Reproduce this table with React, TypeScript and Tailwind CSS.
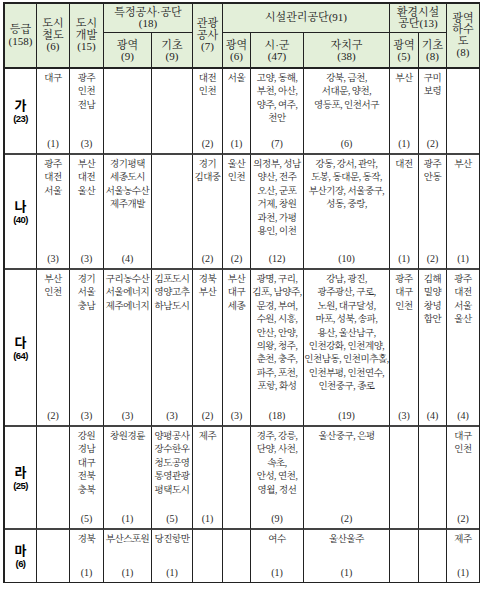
import React from "react"

type Cell = { names?: string; count?: string }

const serif = "font-['Liberation_Serif','Noto_Serif_CJK_KR','Noto_Sans_CJK_KR',serif]"

const rows: { grade: string; total: string; cells: Cell[] }[] = [
  {
    grade: "가",
    total: "(23)",
    cells: [
      { names: "대구", count: "(1)" },
      { names: "광주\n인천\n전남", count: "(3)" },
      {},
      {},
      { names: "대전\n인천", count: "(2)" },
      { names: "서울", count: "(1)" },
      { names: "고양, 동해,\n부천, 아산,\n양주, 여주,\n천안", count: "(7)" },
      { names: "강북, 금천,\n서대문, 양천,\n영등포, 인천서구", count: "(6)" },
      { names: "부산", count: "(1)" },
      { names: "구미\n보령", count: "(2)" },
      {},
    ],
  },
  {
    grade: "나",
    total: "(40)",
    cells: [
      { names: "광주\n대전\n서울", count: "(3)" },
      { names: "부산\n대전\n울산", count: "(3)" },
      { names: "경기평택\n세종도시\n서울농수산\n제주개발", count: "(4)" },
      {},
      { names: "경기\n김대중", count: "(2)" },
      { names: "울산\n인천", count: "(2)" },
      { names: "의정부, 성남\n양산, 전주\n오산, 군포\n거제, 창원\n과천, 가평\n용인, 이천", count: "(12)" },
      { names: "강동, 강서, 관악,\n도봉, 동대문, 동작,\n부산기장, 서울중구,\n성동, 중랑,", count: "(10)" },
      { names: "대전", count: "(1)" },
      { names: "광주\n안동", count: "(2)" },
      { names: "부산", count: "(1)" },
    ],
  },
  {
    grade: "다",
    total: "(64)",
    cells: [
      { names: "부산\n인천", count: "(2)" },
      { names: "경기\n서울\n충남", count: "(3)" },
      { names: "구리농수산\n서울에너지\n제주에너지", count: "(3)" },
      { names: "김포도시\n영양고추\n하남도시", count: "(3)" },
      { names: "경북\n부산", count: "(2)" },
      { names: "부산\n대구\n세종", count: "(3)" },
      {
        names: "광명, 구리,\n김포, 남양주,\n문경, 부여,\n수원, 시흥,\n안산, 안양,\n의왕, 청주,\n춘천, 충주,\n파주, 포천,\n포항, 화성",
        count: "(18)",
      },
      {
        names:
          "강남, 광진,\n광주광산, 구로,\n노원, 대구달성,\n마포, 성북, 송파,\n용산, 울산남구,\n인천강화, 인천계양,\n인천남동, 인천미추홀,\n인천부평, 인천연수,\n인천중구, 종로",
        count: "(19)",
      },
      { names: "광주\n대구\n인천", count: "(3)" },
      { names: "김해\n밀양\n창녕\n함안", count: "(4)" },
      { names: "광주\n대전\n서울\n울산", count: "(4)" },
    ],
  },
  {
    grade: "라",
    total: "(25)",
    cells: [
      {},
      { names: "강원\n경남\n대구\n전북\n충북", count: "(5)" },
      { names: "창원경륜", count: "(1)" },
      { names: "양평공사\n장수한우\n청도공영\n통영관광\n평택도시", count: "(5)" },
      { names: "제주", count: "(1)" },
      {},
      { names: "경주, 강릉,\n단양, 사천,\n속초,\n안성, 연천,\n영월, 정선", count: "(9)" },
      { names: "울산중구, 은평", count: "(2)" },
      {},
      {},
      { names: "대구\n인천", count: "(2)" },
    ],
  },
  {
    grade: "마",
    total: "(6)",
    cells: [
      {},
      { names: "경북", count: "(1)" },
      { names: "부산스포원", count: "(1)" },
      { names: "당진항만", count: "(1)" },
      {},
      {},
      { names: "여수", count: "(1)" },
      { names: "울산울주", count: "(1)" },
      {},
      {},
      { names: "제주", count: "(1)" },
    ],
  },
]

const hd = `bg-[#e3efd9] border-r border-b border-[#222] flex flex-col items-center justify-center text-center whitespace-pre text-[11px] leading-[11.5px] text-[#222] ${serif}`

export default function App() {
  return (
    <div className="bg-white w-[487px] h-[591px] pl-[3px] pt-[2px]">
      <div className="grid w-max grid-cols-[32px_33px_34px_48px_41px_30px_28px_53px_86px_29px_28px_32px] grid-rows-[29px_36px_86px_115px_157px_103px_52px] border-l-2 border-t-2 border-r border-b border-[#222]">
        {/* header */}
        <div className={`${hd} row-span-2 border-b-2`}>
          <span>등급</span>
          <span>(158)</span>
        </div>
        <div className={`${hd} row-span-2 border-b-2`}>
          <span>도시</span>
          <span>철도</span>
          <span>(6)</span>
        </div>
        <div className={`${hd} row-span-2 border-b-2`}>
          <span>도시</span>
          <span>개발</span>
          <span>(15)</span>
        </div>
        <div className={`${hd} col-span-2`}>
          <span>특정공사·공단</span>
          <span>(18)</span>
        </div>
        <div className={`${hd} row-span-2 border-b-2`}>
          <span>관광</span>
          <span>공사</span>
          <span>(7)</span>
        </div>
        <div className={`${hd} col-span-3`}>
          <span>시설관리공단(91)</span>
        </div>
        <div className={`${hd} col-span-2`}>
          <span>환경시설</span>
          <span>공단(13)</span>
        </div>
        <div className={`${hd} row-span-2 border-r-0 border-b-2`}>
          <span>광역</span>
          <span>하수</span>
          <span>도</span>
          <span>(8)</span>
        </div>
        {[
          ["광역", "(9)"],
          ["기초", "(9)"],
          ["광역", "(6)"],
          ["시·군", "(47)"],
          ["자치구", "(38)"],
          ["광역", "(5)"],
          ["기초", "(8)"],
        ].map(([a, b], i) => (
          <div key={i} className={`${hd} border-b-2 pt-[2px]`}>
            <span>{a}</span>
            <span>{b}</span>
          </div>
        ))}

        {/* body */}
        {rows.map((row, ri) => (
          <React.Fragment key={row.grade}>
            <div
              className={`border-r border-[#222] flex flex-col items-center justify-center gap-[1px] ${
                ri < rows.length - 1 ? "border-b-2 border-b-[#444]" : ""
              }`}
            >
              <span className="font-['Noto_Sans_CJK_KR',sans-serif] font-bold text-[13px] leading-[15px] text-black">
                {row.grade}
              </span>
              <span className="font-['Liberation_Sans',sans-serif] font-bold text-[9.5px] leading-[12px] tracking-[-0.6px] text-black">
                {row.total}
              </span>
            </div>
            {row.cells.map((c, ci) => (
              <div
                key={ci}
                className={`border-[#222] flex flex-col items-center justify-between pt-[3px] pb-[3px] text-[9.5px] leading-[13.4px] tracking-[-0.45px] text-[#2a2a2a] text-center ${serif} ${
                  ci < row.cells.length - 1 ? "border-r" : ""
                } ${ri < rows.length - 1 ? "border-b-2 border-b-[#444]" : ""}`}
              >
                <div className="whitespace-pre">{c.names}</div>
                <div className="text-[10px] tracking-normal">{c.count}</div>
              </div>
            ))}
          </React.Fragment>
        ))}
      </div>
    </div>
  )
}
